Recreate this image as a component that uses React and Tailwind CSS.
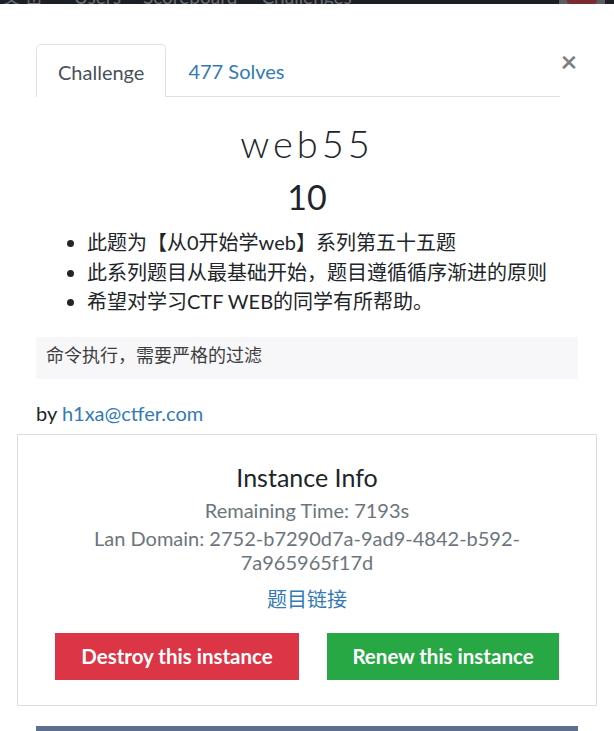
import React from "react";

export default function App() {
  const font = { fontFamily: 'Lato, "Noto Sans CJK SC", sans-serif' };
  return (
    <div className="w-[614px] h-[731px] overflow-hidden bg-white text-[#212529]" style={font}>
      {/* top navbar sliver (behind backdrop) */}
      <div className="h-[4px] overflow-hidden bg-[#1c1f23] flex items-end text-[19px] leading-[20px] text-[#6a6e72]">
        <div className="flex items-end shrink-0 mb-[-3px]">
          <span className="ml-[2px] w-[62px]">文 ⊞</span>
          <span className="ml-[10px]">Users</span>
          <span className="ml-[22px]">Scoreboard</span>
          <span className="ml-[24px]">Challenges</span>
        </div>
        <div className="ml-auto mr-[9px] w-[46px] h-[4px] bg-[#5a5d60] flex justify-center">
          <div className="w-[30px] h-[4px] rounded-b-full bg-[#7a2a30]" />
        </div>
      </div>

      {/* header tabs */}
      <div className="px-[36px] mt-[40px] flex">
        <ul className="flex flex-1 border-b border-[#dee2e6] h-[53px]">
          <li className="h-[53px] mb-[-1px] px-[21px] pt-[1px] flex items-center border border-b-0 border-[#dee2e6] rounded-t-[5px] bg-white text-[20px] text-[#495057]">
            Challenge
          </li>
          <li className="h-[53px] px-[21px] pt-[1px] flex items-center border border-transparent text-[20px] text-[#337ab7]">
            477 Solves
          </li>
        </ul>
        <button className="w-[18px] self-start text-[29px] leading-[34px] font-bold text-black/50 flex justify-center">
          ×
        </button>
      </div>

      {/* challenge body */}
      <div className="px-[36px]">
        <h3 className="mt-[23px] text-center text-[38px] leading-[46px] tracking-[4px] font-light text-[#212529]">web55</h3>
        <h4 className="mt-[11px] text-center text-[34px] leading-[40px] text-[#212529]">10</h4>
        <ul className="mt-[11px] list-disc pl-[51px] text-[20px] leading-[29.5px] text-[#212529]">
          <li>此题为【从0开始学web】系列第五十五题</li>
          <li>此系列题目从最基础开始，题目遵循循序渐进的原则</li>
          <li>希望对学习CTF WEB的同学有所帮助。</li>
        </ul>
        <div
          className="mt-[20px] h-[42px] bg-[#f7f7f9] px-[10px] flex items-center text-[18px] text-[#3d3d3d]"
          style={{ fontFamily: '"Liberation Mono", "Noto Sans CJK SC", monospace' }}
        >
          命令执行，需要严格的过滤
        </div>
        <p className="mt-[22px] text-[20px] leading-[24px]">
          by <span className="text-[#337ab7]">h1xa@ctfer.com</span>
        </p>
      </div>

      {/* instance info */}
      <div className="mx-[17px] mt-[9px] border border-[#dddddd] pt-[26px] pb-[25px] flex flex-col items-center text-center">
        <h4 className="text-[25px] leading-[32px] text-[#212529]">Instance Info</h4>
        <p className="mt-[5px] text-[20px] leading-[24px] text-[#6c757d]">Remaining Time: 7193s</p>
        <p className="mt-[4px] text-[20px] leading-[24px] text-[#6c757d]">
          Lan Domain: 2752-b7290d7a-9ad9-4842-b592-
          <br />
          7a965965f17d
        </p>
        <p className="mt-[12px] text-[20px] leading-[26px] text-[#337ab7]">题目链接</p>
        <div className="mt-[21px] flex justify-center gap-[28px]">
          <button className="h-[47px] w-[244px] bg-[#dc3545] text-white text-[20.5px] font-bold flex items-center justify-center">
            Destroy this instance
          </button>
          <button className="h-[47px] w-[232px] bg-[#28a745] text-white text-[20.5px] font-bold flex items-center justify-center">
            Renew this instance
          </button>
        </div>
      </div>

      {/* next element sliver */}
      <div className="mx-[36px] mt-[20px] h-[10px] bg-[#5b6f8e]" />
    </div>
  );
}
